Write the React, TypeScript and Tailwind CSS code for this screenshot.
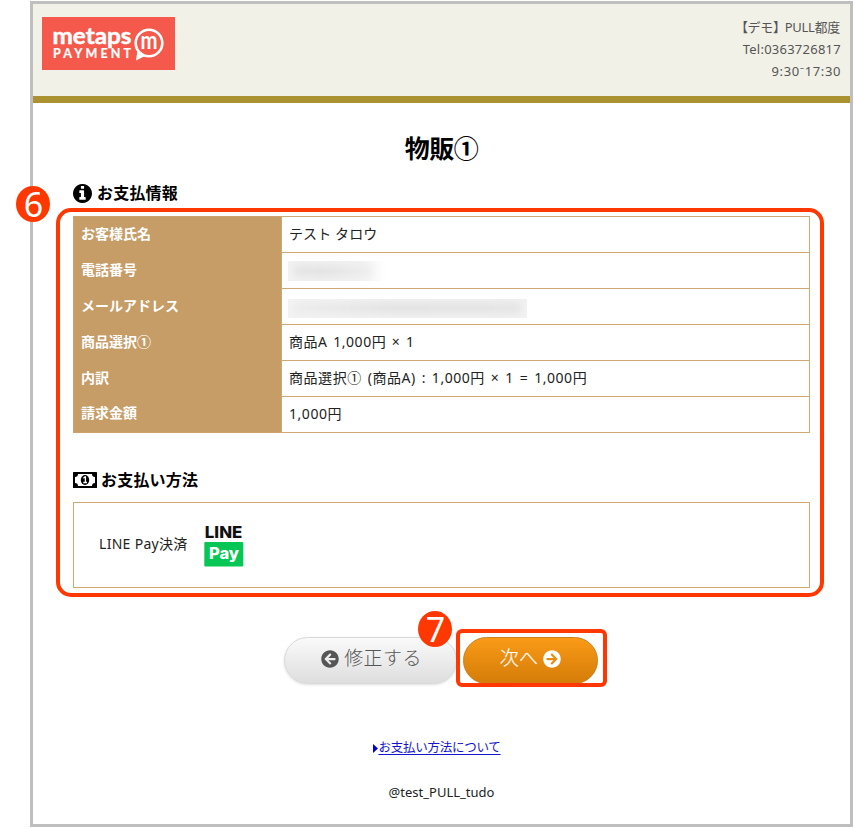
import type { ReactNode } from "react"
import { FaArrowCircleLeft, FaArrowCircleRight } from "react-icons/fa"

interface PaymentRow {
  label: string
  value: ReactNode
}

const ROWS: PaymentRow[] = [
  { label: "お客様氏名", value: <span className="tracking-[0.1px]">テスト タロウ</span> },
  {
    label: "電話番号",
    value: (
      <span className="-ml-px mt-0.5 block h-5 w-[98px] overflow-hidden bg-linear-to-r from-[#f3f3f3] via-[#f3f3f3] via-75% to-white">
        <span className="ml-1.5 block h-full w-[78px] pt-1">
          <span className="block h-3 bg-linear-to-r from-[#e4e4e4] via-[#e2e2e2] via-40% to-[#eeeeee] blur-[4px]" />
        </span>
      </span>
    ),
  },
  {
    label: "メールアドレス",
    value: (
      <span className="-ml-px mt-[5px] block h-[19px] w-[239px] overflow-hidden bg-[#f3f3f3] pt-[3px]">
        <span className="mx-1.5 block h-3 bg-linear-to-r from-[#ececec] via-[#e2e2e2] via-45% to-[#e4e4e4] blur-[4px]" />
      </span>
    ),
  },
  {
    label: "商品選択①",
    value: <span className="tracking-[0.55px] [word-spacing:1.4px]">商品A 1,000円 × 1</span>,
  },
  {
    label: "内訳",
    value: (
      <span className="tracking-[0.55px] [word-spacing:1.7px]">商品選択① (商品A) : 1,000円 × 1 = 1,000円</span>
    ),
  },
  { label: "請求金額", value: <span className="tracking-[0.55px]">1,000円</span> },
]

function Logo() {
  return (
    <svg width="133" height="53" viewBox="0 0 133 53" className="block">
      <rect width="133" height="53" fill="#f4594b" />
      <text x="10.5" y="26.5" fontFamily="Lato" fontSize="23" fontWeight="700" fill="#fff" stroke="#fff" strokeWidth="0.5" textLength="79" lengthAdjust="spacingAndGlyphs">
        metaps
      </text>
      <text x="11" y="41" fontFamily="Lato" fontSize="12.5" fontWeight="700" fill="#fff" stroke="#fff" strokeWidth="0.2" textLength="78">
        PAYMENT
      </text>
      <circle cx="107" cy="26" r="13.3" fill="none" stroke="#fff" strokeWidth="2.6" />
      <path d="M95.5 33 L94 43.5 L104 38.5 Z" fill="#fff" />
      <text x="98.5" y="32" fontFamily="Lato" fontSize="24" fontWeight="700" fill="#fff" textLength="17" lengthAdjust="spacingAndGlyphs">
        m
      </text>
    </svg>
  )
}

function InfoIcon() {
  return (
    <svg width="19" height="19" viewBox="0 128 1536 1536" className="block">
      <path
        fill="#000"
        d="M1024 1376v-160q0-14-9-23t-23-9h-96v-512q0-14-9-23t-23-9h-320q-14 0-23 9t-9 23v160q0 14 9 23t23 9h96v320h-96q-14 0-23 9t-9 23v160q0 14 9 23t23 9h448q14 0 23-9t9-23zm-128-896v-160q0-14-9-23t-23-9h-192q-14 0-23 9t-9 23v160q0 14 9 23t23 9h192q14 0 23-9t9-23zm640 416q0 209-103 385.5t-279.5 279.5-385.5 103-385.5-103-279.5-279.5-103-385.5 103-385.5 279.5-279.5 385.5-103 385.5 103 279.5 279.5 103 385.5z"
      />
    </svg>
  )
}

function MoneyIcon() {
  return (
    <svg width="24" height="16" viewBox="0 0 24 16" className="block">
      <rect width="24" height="16" rx="0.5" fill="#000" />
      <path d="M5 2 H19 A3 3 0 0 0 22 5 V11 A3 3 0 0 0 19 14 H5 A3 3 0 0 0 2 11 V5 A3 3 0 0 0 5 2 Z" fill="#fff" />
      <ellipse cx="12" cy="8" rx="4.2" ry="5" fill="#000" />
      <path d="M10.4 6.2 L12 5 H12.4 V10 M10.3 10.5 H14" fill="none" stroke="#fff" strokeWidth="1.3" />
    </svg>
  )
}

function LinePayLogo() {
  return (
    <svg width="40" height="46" viewBox="0 -2 40 46" className="block overflow-visible">
      <text x="0.8" y="14" fontFamily="Inter" fontSize="16.5" fontWeight="800" fill="#111" textLength="37.5" lengthAdjust="spacingAndGlyphs">
        LINE
      </text>
      <rect x="0.3" y="18" width="39" height="24.5" rx="1" fill="#06c755" />
      <text x="5" y="35" fontFamily="Inter" fontSize="16" fontWeight="800" fill="#fff" textLength="30" lengthAdjust="spacingAndGlyphs">
        Pay
      </text>
    </svg>
  )
}

function StepBadge({ children }: { children: ReactNode }) {
  return (
    <span className="flex h-9 w-[34px] items-center justify-center rounded-[50%] bg-[#ff3700] pl-px font-['Noto_Sans'] text-[34px] leading-9 text-white">
      {children}
    </span>
  )
}

export default function App() {
  return (
    <div className="relative h-[828px] w-[854px] overflow-hidden bg-white pt-px pl-[30px] font-['Noto_Sans','Noto_Sans_CJK_JP',sans-serif] text-[#222]">
      <div className="h-[826px] w-[823px] border-3 border-[#bfbfbf]">
        <header className="flex h-[99px] items-start justify-between border-b-[7px] border-[#a9922f] bg-[#f2f1e8] pt-[13px] pr-[9px] pl-[9px]">
          <Logo />
          <div className="-mt-px text-right text-[13px] leading-[22px] text-[#555]">
            <p className="pr-px tracking-[-0.3px] [word-spacing:-4px]">【デモ】 PULL都度</p>
            <p className="tracking-[0.25px]">Tel:0363726817</p>
            <p className="tracking-[0.6px]">9:30⁻17:30</p>
          </div>
        </header>

        <main className="px-10">
          <h1 className="mt-[27px] text-center text-[25px] leading-[36px] font-bold tracking-[-0.5px] text-black">物販①</h1>

          <h2 className="mt-[15px] flex h-6 items-center gap-[5px] text-[16px] font-bold tracking-[0.2px] text-black">
            <InfoIcon />
            お支払情報
          </h2>
          <table className="mt-[11px] w-[737px] border-collapse border border-[#cda26b] text-[14px] leading-[22px]">
            <tbody>
              {ROWS.map((row) => (
                <tr key={row.label} className="h-9">
                  <th className="w-[208px] bg-[#c69c67] p-0 pb-0.5 pl-[7px] text-left align-middle font-bold text-white">
                    {row.label}
                  </th>
                  <td className="border border-[#d0a876] p-0 pb-0.5 pl-[7px] align-middle">{row.value}</td>
                </tr>
              ))}
            </tbody>
          </table>

          <h2 className="mt-[35px] flex h-6 items-center gap-1 text-[16px] font-bold tracking-[0.2px] text-black">
            <MoneyIcon />
            お支払い方法
          </h2>
          <div className="mt-[10px] flex h-[86px] w-[737px] items-center gap-4 border border-[#d0a876] pl-[25px] text-[14px]">
            <span className="-mt-1 tracking-[0.3px]">LINE Pay決済</span>
            <LinePayLogo />
          </div>
        </main>

        <div className="mt-[49px] flex gap-[6px] pl-[251px]">
          <button
            type="button"
            className="flex h-[47px] w-[173px] items-center justify-center gap-[5px] rounded-full border border-[#d8d8d8] bg-linear-to-b from-[#fafafa] to-[#dedede] pb-1 pl-0.5 text-[19px] font-light tracking-[0.4px] text-[#555] shadow-sm"
          >
            <FaArrowCircleLeft size={18} />
            修正する
          </button>
          <button
            type="button"
            className="flex h-[47px] w-[135px] items-center justify-center gap-[5px] rounded-full border border-[#c9801a] bg-linear-to-b from-[#fa9a17] to-[#d47d08] pb-1 text-[19px] font-light tracking-[0.3px] text-white"
          >
            <span className="[-webkit-text-stroke:0.2px_white]">次へ</span>
            <FaArrowCircleRight size={18} />
          </button>
        </div>

        <footer className="text-center">
          <p className="mt-[53px] flex items-center justify-center pr-[9px] text-[12.5px] leading-[22px] tracking-[-0.25px] text-[#1414cc]">
            <svg width="5" height="9" viewBox="0 0 5 9">
              <path d="M0 0 L5 4.5 L0 9 Z" fill="#0000d0" />
            </svg>
            <a href="#" className="underline underline-offset-2">お支払い方法について</a>
          </p>
          <p className="mt-[22px] text-[13px] leading-[22px]">@test_PULL_tudo</p>
        </footer>
      </div>

      {/* guide frames and step numbers laid over the page */}
      <div className="absolute top-[208px] left-[56px] h-[389px] w-[768px] rounded-[15px] border-4 border-[#ff3700]" />
      <div className="absolute top-[629px] left-[456px] h-[58px] w-[151px] rounded-[6px] border-4 border-[#ff3700]" />
      <div className="absolute top-[186px] left-4">
        <StepBadge>6</StepBadge>
      </div>
      <div className="absolute top-[611px] left-[418px]">
        <StepBadge>7</StepBadge>
      </div>
    </div>
  )
}
